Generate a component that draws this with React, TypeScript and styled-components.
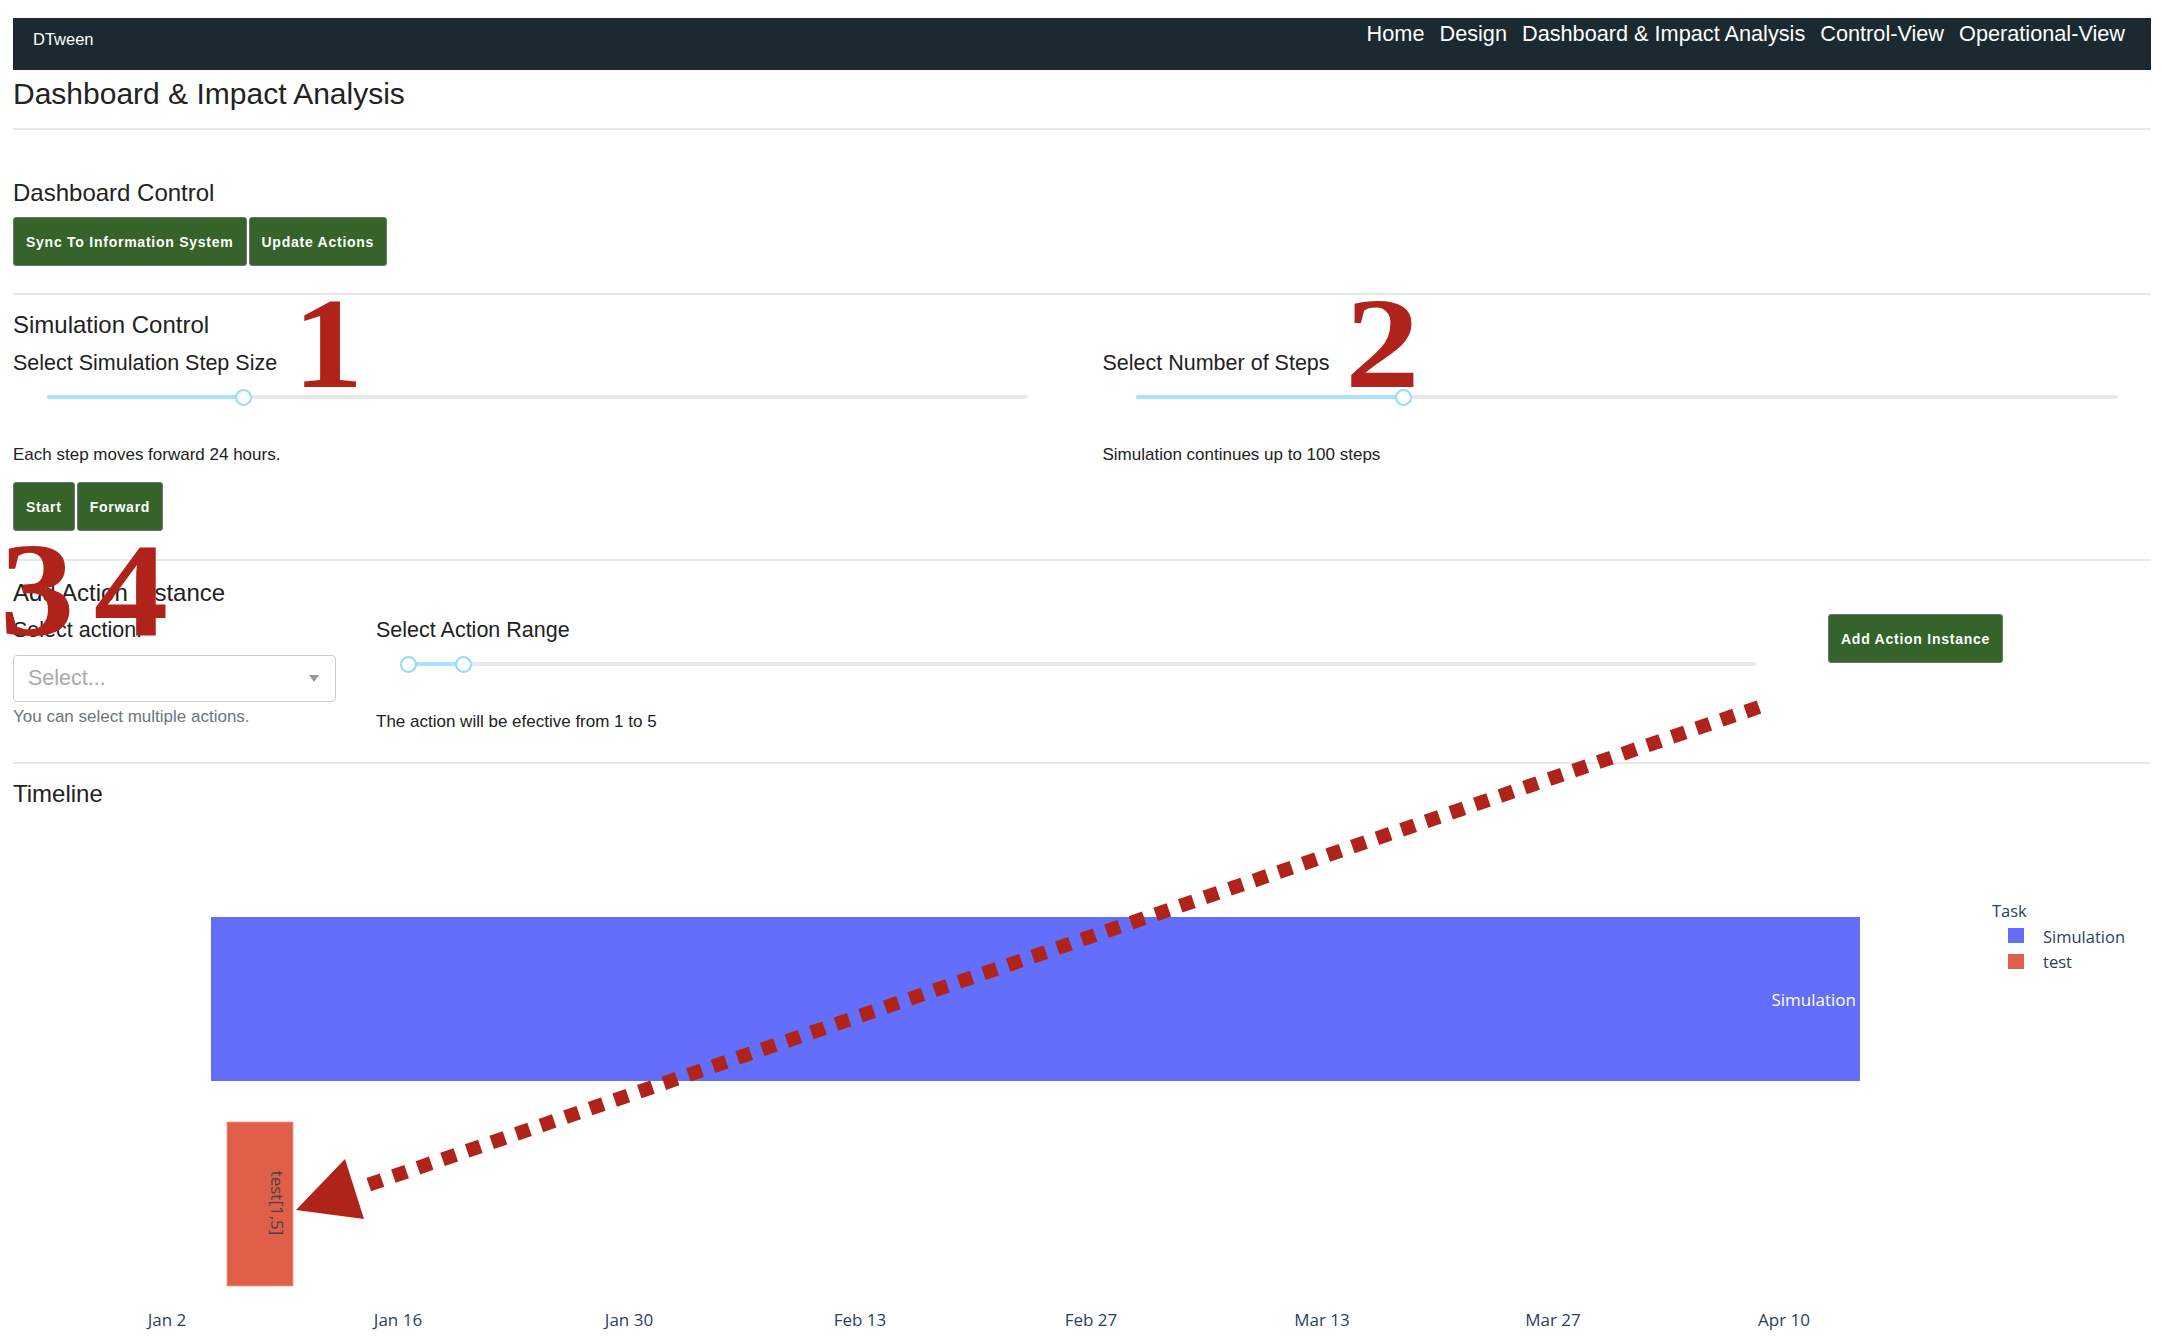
import React from "react";
import styled, { createGlobalStyle } from "styled-components";

const GlobalStyle = createGlobalStyle`
  html, body {
    margin: 0;
    padding: 0;
    background: #ffffff;
  }
  body {
    font-family: "Liberation Sans", Helvetica, Arial, sans-serif;
    color: #222222;
  }
  * { box-sizing: border-box; }
`;

const Page = styled.div`
  position: relative;
  width: 2162px;
  height: 1344px;
  overflow: hidden;
  padding: 18px 11px 0 13px;
`;

const NavBar = styled.nav`
  display: flex;
  justify-content: space-between;
  align-items: flex-start;
  height: 52px;
  background: #1a2a30;
  padding: 0 26px 0 20px;
`;

const Brand = styled.div`
  color: #ffffff;
  font-size: 16.5px;
  line-height: 20px;
  padding-top: 11px;
`;

const NavLinks = styled.div`
  display: flex;
  gap: 15px;
  padding-top: 3px;
`;

const NavLink = styled.a`
  color: #ffffff;
  font-size: 21.7px;
  line-height: 26px;
  text-decoration: none;
`;

const PageTitle = styled.h1`
  margin: 6px 0 0;
  font-size: 30px;
  line-height: 36px;
  font-weight: 400;
  color: #222222;
`;

const Divider = styled.hr<{ $top: number }>`
  border: 0;
  border-top: 2px solid #e8e8e8;
  margin: ${(p) => p.$top}px 0 0;
  height: 0;
`;

const SectionTitle = styled.h3<{ $top: number }>`
  margin: ${(p) => p.$top}px 0 0;
  font-size: 24px;
  line-height: 28px;
  font-weight: 400;
  color: #222222;
`;

const ButtonRow = styled.div<{ $top: number }>`
  display: flex;
  gap: 2px;
  margin-top: ${(p) => p.$top}px;
`;

const ActionButton = styled.button`
  height: 49px;
  padding: 0 12px;
  background: #35632a;
  color: #ffffff;
  border: 1px solid #6b747c;
  border-radius: 3px;
  font-family: "Liberation Sans", Helvetica, Arial, sans-serif;
  font-weight: 700;
  font-size: 14px;
  letter-spacing: 0.75px;
  white-space: nowrap;
  cursor: pointer;
`;

const TwoColumns = styled.div`
  display: grid;
  grid-template-columns: 1fr 1fr;
  column-gap: 41px;
  margin-top: 11px;
`;

const Column = styled.div`
  display: flex;
  flex-direction: column;
  align-items: stretch;
`;

const FieldLabel = styled.label`
  display: block;
  font-size: 21.5px;
  line-height: 26px;
  color: #222222;
`;

const SliderBox = styled.div<{ $pad: number }>`
  height: 42px;
  display: flex;
  align-items: center;
  padding: 0 ${(p) => p.$pad}px;
`;

const SliderRail = styled.div`
  position: relative;
  width: 100%;
  height: 4px;
  border-radius: 2px;
  background: #e9e9e9;
`;

const SliderTrack = styled.div`
  position: absolute;
  top: 0;
  height: 4px;
  border-radius: 2px;
  background: #abe2fb;
`;

const SliderHandle = styled.div`
  position: absolute;
  top: 50%;
  width: 17px;
  height: 17px;
  margin: -8.5px 0 0 -8.5px;
  border: 2px solid #96dbfa;
  border-radius: 50%;
  background: #ffffff;
`;

const HelpText = styled.div<{ $top: number; $muted?: boolean }>`
  margin-top: ${(p) => p.$top}px;
  font-size: 17px;
  line-height: 20px;
  color: ${(p) => (p.$muted ? "#6c757d" : "#222222")};
`;

const ActionRow = styled.div`
  display: grid;
  grid-template-columns: 323px 1412px auto;
  column-gap: 40px;
  margin-top: 10px;
  align-items: start;
`;

const SelectBox = styled.div`
  height: 47px;
  margin-top: 12px;
  border: 1px solid #cccccc;
  border-radius: 4px;
  display: flex;
  align-items: center;
  justify-content: space-between;
  padding: 0 16px 0 14px;
  background: #ffffff;
`;

const Placeholder = styled.span`
  font-size: 21.5px;
  color: #aaaaaa;
`;

const Caret = styled.span`
  width: 0;
  height: 0;
  border-left: 5.5px solid transparent;
  border-right: 5.5px solid transparent;
  border-top: 7px solid #999999;
`;

const ButtonCell = styled.div`
  margin-top: -3px;
`;

const ChartSvg = styled.svg`
  display: block;
  margin-top: 12px;
`;

const ChartText = styled.text<{ $size?: number }>`
  font-family: "Open Sans", verdana, arial, sans-serif;
  font-size: ${(p) => p.$size ?? 17}px;
`;

const Overlay = styled.svg`
  position: absolute;
  left: 0;
  top: 0;
  pointer-events: none;
`;

const BigMark = styled.span<{
  $left: number;
  $top: number;
  $size: number;
  $stretch?: number;
  $spacing?: number;
}>`
  position: absolute;
  left: ${(p) => p.$left}px;
  top: ${(p) => p.$top}px;
  font-family: "Liberation Serif", "Times New Roman", serif;
  font-weight: 700;
  font-size: ${(p) => p.$size}px;
  line-height: 1;
  color: #b0231a;
  white-space: pre;
  letter-spacing: ${(p) => p.$spacing ?? 0}px;
  transform: scaleX(${(p) => p.$stretch ?? 1});
  transform-origin: left top;
  pointer-events: none;
`;

type SliderProps = { from?: number; to: number; range?: boolean; pad: number };

function Slider({ from = 0, to, range = false, pad }: SliderProps) {
  return (
    <SliderBox $pad={pad}>
      <SliderRail>
        <SliderTrack style={{ left: `${from}%`, width: `${to - from}%` }} />
        {range && <SliderHandle style={{ left: `${from}%` }} />}
        <SliderHandle style={{ left: `${to}%` }} />
      </SliderRail>
    </SliderBox>
  );
}

const ticks = [
  { label: "Jan 2", x: 154 },
  { label: "Jan 16", x: 385 },
  { label: "Jan 30", x: 616 },
  { label: "Feb 13", x: 847 },
  { label: "Feb 27", x: 1078 },
  { label: "Mar 13", x: 1309 },
  { label: "Mar 27", x: 1540 },
  { label: "Apr 10", x: 1771 },
];

function TimelineChart() {
  return (
    <ChartSvg width={2138} height={524} viewBox="0 0 2138 524">
      <rect x={198} y={97} width={1649} height={164} fill="#636efa" />
      <ChartText x={1843} y={186} fill="#ffffff" textAnchor="end">
        Simulation
      </ChartText>
      <rect x={214} y={302} width={66} height={164} fill="#e05f48" stroke="#eaa08f" strokeWidth={0.8} />
      <ChartText transform="translate(258,383) rotate(90)" fill="#444444" textAnchor="middle">
        test[1,5]
      </ChartText>
      {ticks.map((t) => (
        <ChartText key={t.label} x={t.x} y={506} fill="#2a3f5f" textAnchor="middle">
          {t.label}
        </ChartText>
      ))}
      <ChartText x={1979} y={97} fill="#2a3f5f" $size={16.5}>
        Task
      </ChartText>
      <rect x={1995} y={108} width={16} height={15} fill="#636efa" />
      <ChartText x={2030} y={123} fill="#2a3f5f" $size={16.5}>
        Simulation
      </ChartText>
      <rect x={1995} y={134} width={16} height={15} fill="#e05f48" />
      <ChartText x={2030} y={148} fill="#2a3f5f" $size={16.5}>
        test
      </ChartText>
    </ChartSvg>
  );
}

export default function App() {
  return (
    <>
      <GlobalStyle />
      <Page>
        <NavBar>
          <Brand>DTween</Brand>
          <NavLinks>
            <NavLink href="#">Home</NavLink>
            <NavLink href="#">Design</NavLink>
            <NavLink href="#">Dashboard &amp; Impact Analysis</NavLink>
            <NavLink href="#">Control-View</NavLink>
            <NavLink href="#">Operational-View</NavLink>
          </NavLinks>
        </NavBar>

        <PageTitle>Dashboard &amp; Impact Analysis</PageTitle>
        <Divider $top={16} />

        <SectionTitle $top={49}>Dashboard Control</SectionTitle>
        <ButtonRow $top={10}>
          <ActionButton>Sync To Information System</ActionButton>
          <ActionButton>Update Actions</ActionButton>
        </ButtonRow>
        <Divider $top={27} />

        <SectionTitle $top={16}>Simulation Control</SectionTitle>
        <TwoColumns>
          <Column>
            <FieldLabel>Select Simulation Step Size</FieldLabel>
            <Slider to={20} pad={34} />
            <HelpText $top={27}>Each step moves forward 24 hours.</HelpText>
            <ButtonRow $top={17}>
              <ActionButton>Start</ActionButton>
              <ActionButton>Forward</ActionButton>
            </ButtonRow>
          </Column>
          <Column>
            <FieldLabel>Select Number of Steps</FieldLabel>
            <Slider to={27.3} pad={33} />
            <HelpText $top={27}>Simulation continues up to 100 steps</HelpText>
          </Column>
        </TwoColumns>
        <Divider $top={28} />

        <SectionTitle $top={18}>Add Action Instance</SectionTitle>
        <ActionRow>
          <Column>
            <FieldLabel>Select action:</FieldLabel>
            <SelectBox>
              <Placeholder>Select...</Placeholder>
              <Caret />
            </SelectBox>
            <HelpText $top={5} $muted>
              You can select multiple actions.
            </HelpText>
          </Column>
          <Column>
            <FieldLabel>Select Action Range</FieldLabel>
            <Slider from={0} to={4.1} range pad={32} />
            <HelpText $top={27}>The action will be efective from 1 to 5</HelpText>
          </Column>
          <ButtonCell>
            <ActionButton>Add Action Instance</ActionButton>
          </ButtonCell>
        </ActionRow>
        <Divider $top={30} />

        <SectionTitle $top={16}>Timeline</SectionTitle>
        <TimelineChart />

        <BigMark $left={293} $top={278} $size={130} $stretch={1.08}>1</BigMark>
        <BigMark $left={1345} $top={278} $size={130} $stretch={1.15}>2</BigMark>
        <BigMark $left={0} $top={524} $size={133} $stretch={1.12} $spacing={-8}>
          3 4
        </BigMark>

        <Overlay width={2162} height={1344} viewBox="0 0 2162 1344">
          <line
            x1={1759}
            y1={707}
            x2={362}
            y2={1187}
            stroke="#b0231a"
            strokeWidth={14}
            strokeDasharray="14 12"
          />
          <polygon points="296,1210 345,1159 364,1219" fill="#b0231a" />
        </Overlay>
      </Page>
    </>
  );
}
